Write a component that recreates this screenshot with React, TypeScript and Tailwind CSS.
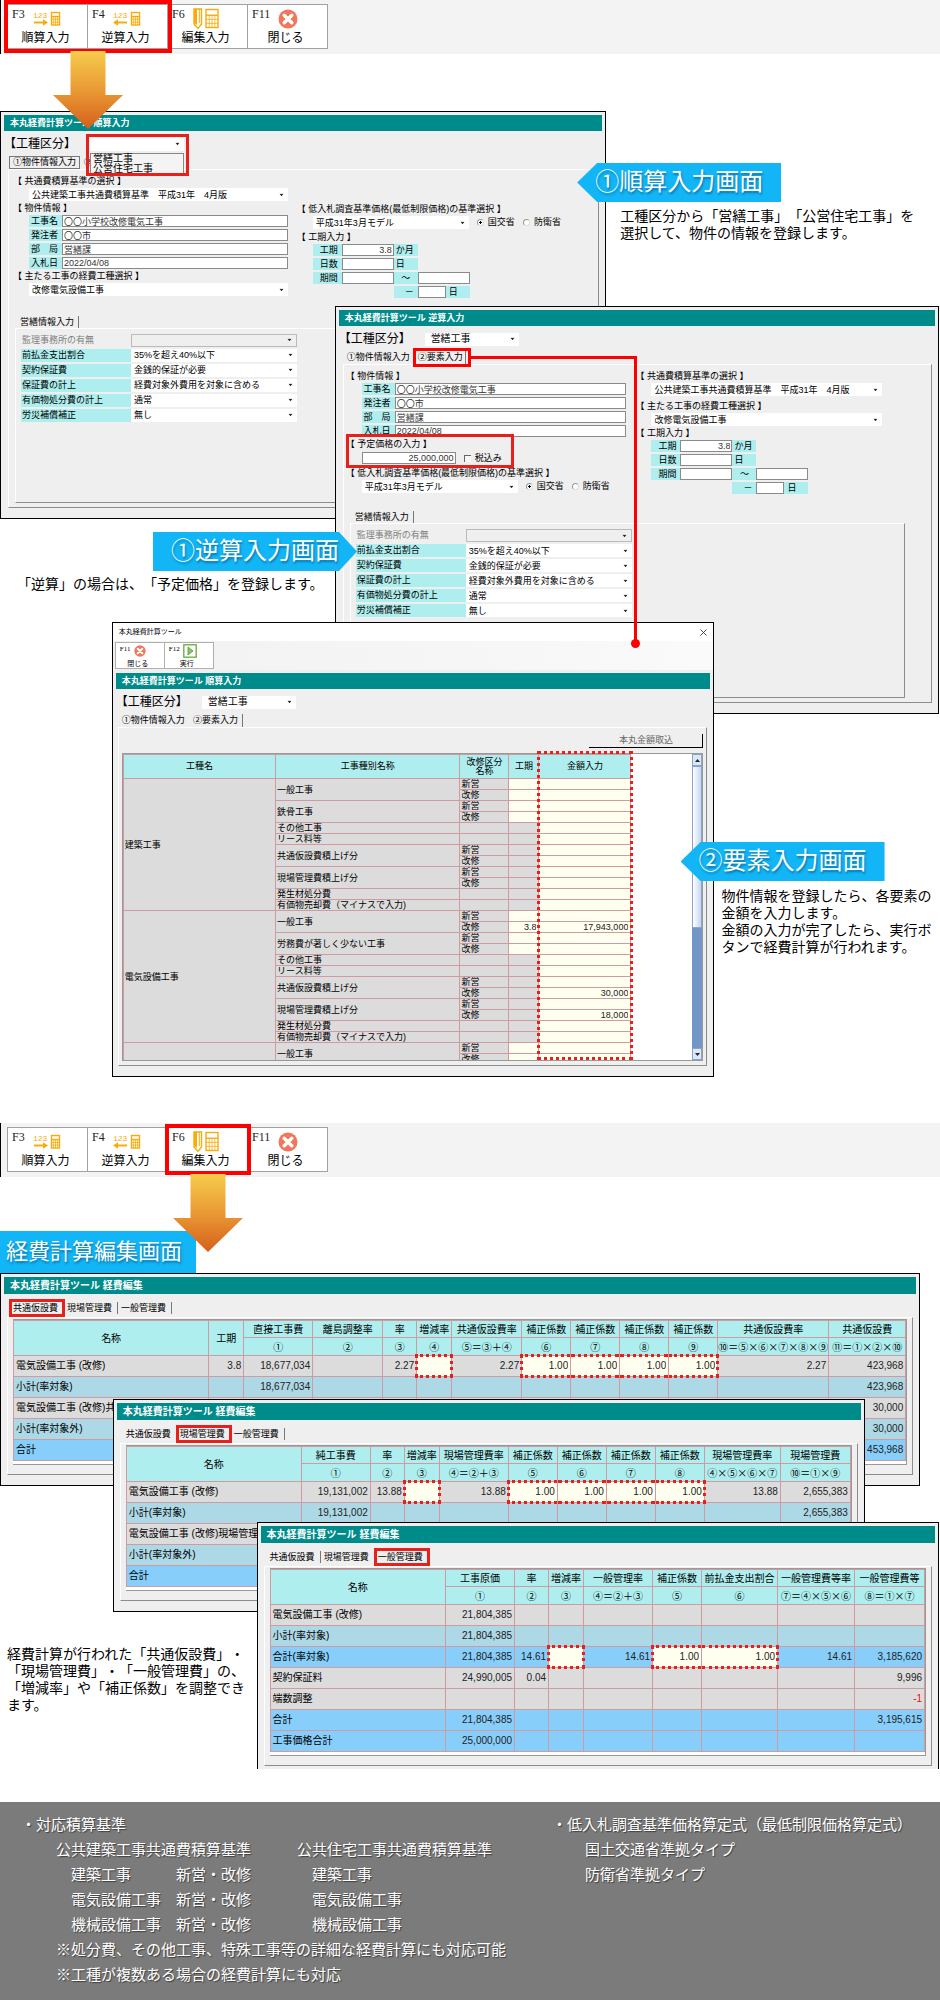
import React, { useId } from 'react';

type Tone = 'gray' | 'light' | 'sky';

interface Column {
    head: string;
    formula?: string;
    width: string;
}

interface CostRow {
    name: string;
    tone: Tone;
    cells: string[];
    edit?: number[];
}

interface WorkItem {
    label: string;
    split?: boolean;
    period?: boolean;
    values?: [string, string][];
}

const toneClass: Record<Tone, string> = {
    gray: 'bg-[#dcdcdc]',
    light: 'bg-[#add8e6]',
    sky: 'bg-[#87cefa]',
};

/* ---------- icons ---------- */

const Calculator: React.FC<{ x: number; y: number; w: number; h: number }> = ({ x, y, w, h }) => (
    <g fill="none" stroke="#f9ab0e" strokeWidth="1.4">
        <rect x={x} y={y} width={w} height={h} />
        <path d={`M${x} ${y + h * 0.32}H${x + w}`} strokeWidth="1.4" />
        <path
            d={`M${x} ${y + h * 0.55}H${x + w}M${x} ${y + h * 0.77}H${x + w}M${x + w * 0.27} ${y + h * 0.32}V${y + h}M${x + w * 0.5} ${y + h * 0.32}V${y + h}M${x + w * 0.74} ${y + h * 0.32}V${y + h}`}
            strokeWidth="0.8"
        />
    </g>
);

const CountIcon: React.FC<{ reverse?: boolean }> = ({ reverse }) => (
    <svg width="28" height="16" viewBox="0 0 28 16" aria-hidden="true">
        <text x="0" y="7" fontSize="8" fontFamily="Liberation Mono" fill="#f9ab0e">123</text>
        {reverse ? (
            <path d="M0 11.5L5 8.2V10.5H14V12.5H5V14.8Z" fill="#f9ab0e" />
        ) : (
            <path d="M15 11.5L10 8.2V10.5H1V12.5H10V14.8Z" fill="#f9ab0e" />
        )}
        <Calculator x={18.5} y={1.5} w={8} h={12.5} />
    </svg>
);

const EditIcon: React.FC = () => (
    <svg width="27" height="22" viewBox="0 0 27 22" aria-hidden="true">
        <path d="M1 1H8.5V16L5 20.5L1 16Z" fill="none" stroke="#f9ab0e" strokeWidth="1.4" />
        <path d="M1 1H4V17L1 15Z" fill="#f9ab0e" />
        <path d="M6.3 1V15" stroke="#f9ab0e" strokeWidth="1" />
        <Calculator x={13} y={1.5} w={12} h={18} />
    </svg>
);

const CloseIcon: React.FC<{ className: string }> = ({ className }) => (
    <svg className={className} viewBox="0 0 20 20" aria-hidden="true">
        <circle cx="10" cy="10" r="9.5" fill="#f0765c" />
        <path d="M6.2 6.2L13.8 13.8M13.8 6.2L6.2 13.8" stroke="#fff" strokeWidth="3.4" strokeLinecap="round" />
    </svg>
);

const RunIcon: React.FC = () => (
    <svg width="14" height="14" viewBox="0 0 14 14" aria-hidden="true">
        <rect x="0.8" y="0.8" width="12.4" height="12.4" fill="#fff" stroke="#6fb04c" strokeWidth="1.4" />
        <path d="M5 3L10 7L5 11Z" fill="#8cc46c" stroke="#4e9a34" strokeWidth="0.8" />
    </svg>
);

const DownArrow: React.FC<{ id: string }> = ({ id }) => (
    <svg className="absolute top-[47px] left-1/2 z-20 -translate-x-1/2" width="70" height="78" viewBox="0 0 70 78" aria-hidden="true">
        <defs>
            <linearGradient id={id} x1="0" y1="0" x2="0" y2="1">
                <stop offset="0" stopColor="#f7cb4b" />
                <stop offset="0.5" stopColor="#e99a35" />
                <stop offset="1" stopColor="#d55f1b" />
            </linearGradient>
        </defs>
        <path d="M17.5 0H52.5V44H70L35 78L0 44H17.5Z" fill={`url(#${id})`} />
    </svg>
);

const Caret: React.FC = () => (
    <svg className="pointer-events-none absolute top-1/2 right-1 -translate-y-1/2" width="5" height="3" viewBox="0 0 5 3" aria-hidden="true">
        <path d="M0.5 0.2H4.5L2.5 2.8Z" fill="#222" />
    </svg>
);

/* ---------- toolbar ---------- */

const ToolButton: React.FC<{ fkey: string; label: string; children: React.ReactNode }> = ({ fkey, label, children }) => (
    <button className="-ml-px flex h-[45px] w-[81px] flex-col border border-[#a0a0a0] bg-white pt-[3px]">
        <span className="flex h-[22px] items-center gap-2 pl-1">
            <span className="self-start font-['Liberation_Serif',serif] text-xs leading-[13px] text-[#222]">{fkey}</span>
            {children}
        </span>
        <span className="self-center pr-1 text-xs leading-[17px] text-black">{label}</span>
    </button>
);

const Toolbar: React.FC<{ mark: 'count' | 'edit' }> = ({ mark }) => (
    <header className="h-[54px] border-l border-black bg-[#f3f3f3] pt-1">
        <div className="flex pl-[7px]">
            <div className="relative flex">
                <ToolButton fkey="F3" label="順算入力"><CountIcon /></ToolButton>
                <ToolButton fkey="F4" label="逆算入力"><CountIcon reverse /></ToolButton>
                {mark === 'count' && (
                    <>
                        <span className="absolute -inset-1 z-10 border-4 border-[#f00]" />
                        <DownArrow id="arrow-count" />
                    </>
                )}
            </div>
            <div className="relative flex">
                <ToolButton fkey="F6" label="編集入力"><EditIcon /></ToolButton>
                {mark === 'edit' && (
                    <>
                        <span className="absolute -inset-[3px] z-10 border-4 border-[#f00]" />
                        <DownArrow id="arrow-edit" />
                    </>
                )}
            </div>
            <ToolButton fkey="F11" label="閉じる"><CloseIcon className="size-5" /></ToolButton>
        </div>
    </header>
);

/* ---------- window parts ---------- */

const Window: React.FC<{ title: string; large?: boolean; className: string; top?: React.ReactNode; children: React.ReactNode }> = ({
    title,
    large,
    className,
    top,
    children,
}) => (
    <section className={`border border-black bg-[#efefef] ${className}`}>
        {top}
        <div className="px-[3px] pt-[3px]">
            <h2 className={`bg-[#008b8b] pl-[6px] font-bold whitespace-nowrap text-white ${large ? 'text-[10px] leading-[17px]' : 'text-[9px] leading-[16px]'}`}>
                {title}
            </h2>
            {children}
        </div>
    </section>
);

const Combo: React.FC<{ id?: string; label?: string; value: string; className?: string; disabled?: boolean }> = ({
    id,
    label,
    value,
    className = '',
    disabled,
}) => (
    <span className={`relative block h-[13px] ${disabled ? 'border border-[#bbb] bg-[#efefef]' : 'bg-white'} ${className}`}>
        <select id={id} aria-label={label} disabled={disabled} className="block h-full w-full appearance-none pl-[3px] leading-[12px] text-black">
            <option>{value}</option>
        </select>
        <Caret />
    </span>
);

const HeadedCombo: React.FC<{ head: string; value: string; className: string; children?: React.ReactNode }> = ({
    head,
    value,
    className,
    children,
}) => {
    const id = useId();
    return (
        <div>
            <label htmlFor={id} className="block h-[14px] leading-[14px] whitespace-nowrap">{`【 ${head} 】`}</label>
            <div className="ml-4 flex items-center">
                <Combo id={id} value={value} className={className} />
                {children}
            </div>
        </div>
    );
};

const Heading: React.FC<{ children: string }> = ({ children }) => (
    <h3 className="h-[14px] leading-[14px] whitespace-nowrap">{`【 ${children} 】`}</h3>
);

const inputClass = 'block h-3 min-w-0 border border-[#8a8a8a] bg-white px-px leading-[10px] text-[#333]';

const projectFields = [
    ['工事名', '〇〇小学校改修電気工事'],
    ['発注者', '〇〇市'],
    ['部　局', '営繕課'],
    ['入札日', '2022/04/08'],
];

const ProjectInfo: React.FC = () => {
    const id = useId();
    return (
        <div>
            <Heading>物件情報</Heading>
            <div className="mr-[9px] ml-4 flex flex-col gap-[2px]">
                {projectFields.map(([name, value], i) => (
                    <div key={name} className="flex">
                        <label htmlFor={`${id}-${i}`} className="w-[33px] bg-[#afeeee] pr-1 text-right leading-[12px]">{name}</label>
                        <input id={`${id}-${i}`} defaultValue={value} className={`${inputClass} flex-1`} />
                    </div>
                ))}
            </div>
        </div>
    );
};

const Period: React.FC = () => {
    const id = useId();
    const cap = 'bg-[#afeeee] leading-[12px]';
    return (
        <div>
            <Heading>工期入力</Heading>
            <div className="ml-4 grid grid-cols-[29px_52px_24px_28px_24px] gap-y-[2px]">
                <label htmlFor={`${id}-m`} className={`${cap} pr-1 text-right`}>工期</label>
                <input id={`${id}-m`} defaultValue="3.8" className={`${inputClass} text-right`} />
                <span className={`${cap} pl-[2px]`}>か月</span>
                <label htmlFor={`${id}-d`} className={`${cap} col-start-1 pr-1 text-right`}>日数</label>
                <input id={`${id}-d`} className={inputClass} />
                <span className={`${cap} pl-[2px]`}>日</span>
                <label htmlFor={`${id}-s`} className={`${cap} col-start-1 pr-1 text-right`}>期間</label>
                <input id={`${id}-s`} className={inputClass} />
                <label htmlFor={`${id}-e`} className={`${cap} text-center`}>～</label>
                <input id={`${id}-e`} className={`${inputClass} col-span-2`} />
                <label htmlFor={`${id}-h`} className={`${cap} col-start-3 pr-1 text-right`}>－</label>
                <input id={`${id}-h`} className={inputClass} />
                <span className={`${cap} pl-[3px]`}>日</span>
            </div>
        </div>
    );
};

const Ministry: React.FC<{ name: string }> = ({ name }) => (
    <>
        {['国交省', '防衛省'].map((text, i) => (
            <label key={text} className="ml-2 flex items-center gap-1 whitespace-nowrap">
                <input
                    type="radio"
                    name={name}
                    defaultChecked={i === 0}
                    className="size-[7px] appearance-none rounded-full border border-[#999] border-r-[#ddd] border-b-[#ddd] bg-white checked:bg-[radial-gradient(#000_30%,#fff_40%)]"
                />
                {text}
            </label>
        ))}
    </>
);

const LowBid: React.FC<{ name: string }> = ({ name }) => (
    <HeadedCombo head="低入札調査基準価格(最低制限価格)の基準選択" value="平成31年3月モデル" className="w-[156px]">
        <Ministry name={name} />
    </HeadedCombo>
);

const repairFields = [
    ['監理事務所の有無', ''],
    ['前払金支出割合', '35%を超え40%以下'],
    ['契約保証費', '金銭的保証が必要'],
    ['保証費の計上', '経費対象外費用を対象に含める'],
    ['有価物処分費の計上', '通常'],
    ['労災補償補正', '無し'],
];

const RepairInfo: React.FC<{ className: string }> = ({ className }) => {
    const id = useId();
    return (
        <div className={className}>
            <button className="ml-[5px] block h-3 border-r border-[#777] pr-1 leading-[12px]">営繕情報入力</button>
            <div className="border border-t-white border-r-[#8c8c8c] border-b-[#8c8c8c] border-l-white pt-[5px] pb-20 pl-[5px]">
                <div className="flex flex-col gap-[2px]">
                    {repairFields.map(([name, value], i) => (
                        <div key={name} className="flex">
                            <label
                                htmlFor={`${id}-${i}`}
                                className={i === 0 ? 'w-[110px] pl-px leading-[13px] text-[#808080]' : 'w-[110px] bg-[#afeeee] pl-px leading-[13px]'}
                            >
                                {name}
                            </label>
                            <Combo id={`${id}-${i}`} value={value} disabled={i === 0} className="w-[166px]" />
                        </div>
                    ))}
                </div>
            </div>
        </div>
    );
};

const Category: React.FC<{ value: string; children?: React.ReactNode }> = ({ value, children }) => {
    const id = useId();
    return (
        <div className="mt-[5px] flex h-4 items-center">
            <label htmlFor={id} className="w-[86px] text-xs leading-4 whitespace-nowrap">【工種区分】</label>
            <div className="relative">
                <Combo id={id} value={value} className="w-[94px] pl-[3px] text-[10px]" />
                {children}
            </div>
        </div>
    );
};

const panelClass = 'border border-t-white border-r-[#8c8c8c] border-b-[#8c8c8c] border-l-white';

const StandardCombo: React.FC = () => (
    <HeadedCombo head="共通費積算基準の選択" value="公共建築工事共通費積算基準　平成31年　4月版" className="mr-[9px] flex-1" />
);

const MainWorkCombo: React.FC = () => (
    <HeadedCombo head="主たる工事の経費工種選択" value="改修電気設備工事" className="mr-[9px] flex-1" />
);

const ForwardWindow: React.FC<{ className: string }> = ({ className }) => (
    <Window title="本丸経費計算ツール 順算入力" className={`pb-[10px] text-[9px] ${className}`}>
        <Category value="">
            <ul className="absolute top-[15px] left-0 z-10 w-[94px] border border-[#888] bg-[#f4f4f4] pl-[2px] text-[10px] leading-[10px]">
                <li>営繕工事</li>
                <li>公営住宅工事</li>
            </ul>
            <span className="absolute -top-1 -left-1 z-10 h-[42px] w-[103px] border-3 border-[#e8201c]" />
        </Category>
        <div className="mt-1 ml-[5px] flex h-[13px] gap-1 leading-[11px] whitespace-nowrap">
            <button className="border border-[#777] px-[3px]">①物件情報入力</button>
            <button>②要素入力</button>
        </div>
        <div className={`mr-[3px] ml-1 pt-1 pb-1 pl-1 ${panelClass}`}>
            <div className="flex">
                <div className="w-[48.5%] shrink-0">
                    <StandardCombo />
                    <ProjectInfo />
                    <MainWorkCombo />
                </div>
                <div className="pt-7">
                    <LowBid name="ministry-forward" />
                    <Period />
                </div>
            </div>
            <RepairInfo className="mt-[18px] mr-1 ml-[2px]" />
        </div>
    </Window>
);

const ReverseWindow: React.FC<{ className: string }> = ({ className }) => (
    <Window title="本丸経費計算ツール 逆算入力" className={`pb-[10px] text-[9px] ${className}`}>
        <Category value="営繕工事" />
        <div className="mt-1 ml-2 flex h-[13px] gap-2 leading-[13px] whitespace-nowrap">
            <button>①物件情報入力</button>
            <div className="relative flex">
                <button className="border-r border-[#777] pr-[2px]">②要素入力</button>
                <span className="absolute -inset-x-[5px] -inset-y-[3px] border-3 border-[#f00]" />
                {/* line that leads to the window opened by this tab */}
                <span className="absolute top-[5px] left-[calc(100%+5px)] z-20 h-[288px] w-[166px] border-t-3 border-r-3 border-[#f00]">
                    <span className="absolute -right-[6px] -bottom-1 size-[9px] rounded-full bg-[#f00]" />
                </span>
            </div>
        </div>
        <div className={`mr-[3px] ml-1 pt-1 pb-1 pl-[2px] ${panelClass}`}>
            <div className="flex">
                <div className="w-[49.5%] shrink-0">
                    <ProjectInfo />
                    <div className="relative mb-[2px]">
                        <Heading>予定価格の入力</Heading>
                        <div className="ml-4 flex items-center gap-2 pt-px">
                            <input aria-label="予定価格" defaultValue="25,000,000" className={`${inputClass} w-[94px] text-right`} />
                            <label className="flex items-center gap-1 leading-[12px]">
                                <input type="checkbox" className="size-[7px] appearance-none border-t border-l border-[#666] bg-[#f6f6f6]" />
                                税込み
                            </label>
                        </div>
                        <span className="absolute -top-[3px] -bottom-1 left-0 w-[168px] border-3 border-[#e8201c]" />
                    </div>
                    <LowBid name="ministry-reverse" />
                </div>
                <div className="flex-1 pr-10">
                    <StandardCombo />
                    <div className="h-[3px]" />
                    <MainWorkCombo />
                    <Period />
                </div>
            </div>
            <RepairInfo className="mt-[17px] mr-[26px] ml-1" />
        </div>
    </Window>
);

/* ---------- element input window ---------- */

const commonItems = (values: [string, string][][] = []): WorkItem[] => [
    { label: 'その他工事' },
    { label: 'リース料等' },
    { label: '共通仮設費積上げ分', split: true, values: values[0] },
    { label: '現場管理費積上げ分', split: true, values: values[1] },
    { label: '発生材処分費' },
    { label: '有価物売却費（マイナスで入力)' },
];

const workGroups: { name: string; items: WorkItem[] }[] = [
    {
        name: '建築工事',
        items: [
            { label: '一般工事', split: true, period: true },
            { label: '鉄骨工事', split: true, period: true },
            ...commonItems(),
        ],
    },
    {
        name: '電気設備工事',
        items: [
            { label: '一般工事', split: true, period: true, values: [['', ''], ['3.8', '17,943,000']] },
            { label: '労務費が著しく少ない工事', split: true, period: true },
            ...commonItems([
                [['', ''], ['', '30,000']],
                [['', ''], ['', '18,000']],
            ]),
        ],
    },
    { name: '', items: [{ label: '一般工事', split: true, period: true }] },
];

const cellLine = 'border border-[#cf9ba2]';
const cellInput = 'block h-[10px] w-full bg-transparent pr-[2px] text-right leading-[10px] text-[#222]';

const WorkTable: React.FC = () => (
    <table className="w-full table-fixed border-collapse leading-[10px] whitespace-nowrap">
        <colgroup>
            <col className="w-[30%]" />
            <col />
            <col className="w-[49px]" />
            <col className="w-[30px]" />
            <col className="w-[92px]" />
        </colgroup>
        <thead>
            <tr className="h-[24px] bg-[#afeeee]">
                {['工種名', '工事種別名称', '改修区分\n名称', '工期', '金額入力'].map(head => (
                    <th key={head} className={`${cellLine} font-normal whitespace-pre leading-[9px]`}>{head}</th>
                ))}
            </tr>
        </thead>
        <tbody className="bg-[#dcdcdc]">
            {workGroups.map((group, g) => {
                const total = group.items.reduce((sum, item) => sum + (item.split ? 2 : 1), 0);
                return group.items.flatMap((item, n) =>
                    (item.split ? ['新営', '改修'] : ['']).map((kind, k) => {
                        const [period, amount] = item.values?.[k] ?? ['', ''];
                        return (
                            <tr key={`${g}-${n}-${k}`} className="h-[11px]">
                                {n === 0 && k === 0 && <td rowSpan={total} className={`${cellLine} pl-px`}>{group.name}</td>}
                                {k === 0 && <td rowSpan={item.split ? 2 : 1} className={`${cellLine} pl-px`}>{item.label}</td>}
                                <td className={`${cellLine} pl-px`}>{kind}</td>
                                <td className={`${cellLine} ${item.period ? 'bg-[#fffff0]' : ''}`}>
                                    {item.period && <input aria-label={`${item.label} ${kind} 工期`} defaultValue={period} className={cellInput} />}
                                </td>
                                <td className={`${cellLine} bg-[#fffff0]`}>
                                    <input aria-label={`${item.label} ${kind} 金額`} defaultValue={amount} className={cellInput} />
                                </td>
                            </tr>
                        );
                    })
                );
            })}
        </tbody>
    </table>
);

const SmallToolButton: React.FC<{ fkey: string; label: string; children: React.ReactNode }> = ({ fkey, label, children }) => (
    <button className="-ml-px h-[27px] w-[50px] border border-[#b0b0b0] bg-white text-[7px]">
        <span className="flex h-[15px] items-center gap-[3px] pl-1">
            <span className="self-start font-['Liberation_Serif',serif] leading-[10px]">{fkey}</span>
            {children}
        </span>
        <span className="block pr-1 leading-[9px]">{label}</span>
    </button>
);

const ElementWindow: React.FC<{ className: string }> = ({ className }) => (
    <Window
        title="本丸経費計算ツール 順算入力"
        className={`pb-[10px] text-[9px] ${className}`}
        top={
            <>
                <div className="flex h-[18px] items-center justify-between bg-white pr-[6px] pl-[6px] text-[7px]">
                    <span>本丸経費計算ツール</span>
                    <button aria-label="閉じる">
                        <svg width="7" height="7" viewBox="0 0 8 8" aria-hidden="true">
                            <path d="M0.5 0.5L7.5 7.5M7.5 0.5L0.5 7.5" stroke="#333" strokeWidth="1" />
                        </svg>
                    </button>
                </div>
                <div className="flex h-[29px] bg-gradient-to-r from-[#f1f1f1] to-[#fafafa] pt-px pl-[3px]">
                    <SmallToolButton fkey="F11" label="閉じる"><CloseIcon className="size-3" /></SmallToolButton>
                    <SmallToolButton fkey="F12" label="実行"><RunIcon /></SmallToolButton>
                </div>
            </>
        }
    >
        <Category value="営繕工事" />
        <div className="mt-1 ml-[6px] flex h-[13px] gap-2 leading-[13px] whitespace-nowrap">
            <button>①物件情報入力</button>
            <button className="border-r border-[#777] pr-1">②要素入力</button>
        </div>
        <div className={`mr-[3px] ml-[2px] px-[3px] pt-[6px] pb-1 ${panelClass}`}>
            <button className="ml-auto block h-[14px] w-[114px] border-r border-b border-black leading-[13px] text-[#666]">本丸金額取込</button>
            <div className="mt-[5px] flex border border-[#999] bg-white">
                <div className="relative min-w-0 flex-1">
                    <div className="h-[306px] overflow-hidden">
                        <WorkTable />
                    </div>
                    <span className="absolute -top-[3px] -right-[2px] bottom-0 w-[96px] border-3 border-dotted border-[#e8201c]" />
                </div>
                <div className="ml-[61px] flex w-[10px] flex-col bg-[#7296c8]">
                    <button aria-label="上へ" className="flex h-3 items-center justify-center border border-[#8aa5cc] bg-[#dce8f8]">
                        <svg width="5" height="3" viewBox="0 0 5 3" aria-hidden="true"><path d="M0 3H5L2.5 0Z" fill="#223" /></svg>
                    </button>
                    <div className="h-[162px] border border-[#8aa5cc] bg-gradient-to-r from-white to-[#c4d6f0]" />
                    <button aria-label="下へ" className="mt-auto flex h-3 items-center justify-center border border-[#8aa5cc] bg-[#dce8f8]">
                        <svg width="5" height="3" viewBox="0 0 5 3" aria-hidden="true"><path d="M0 0H5L2.5 3Z" fill="#223" /></svg>
                    </button>
                </div>
            </div>
        </div>
    </Window>
);

/* ---------- cost edit windows ---------- */

const commonColumns: Column[] = [
    { head: '名称', width: '' },
    { head: '工期', width: 'w-[35px]' },
    { head: '直接工事費', formula: '①', width: 'w-[69px]' },
    { head: '離島調整率', formula: '②', width: 'w-[70px]' },
    { head: '率', formula: '③', width: 'w-[34px]' },
    { head: '増減率', formula: '④', width: 'w-[35px]' },
    { head: '共通仮設費率', formula: '⑤＝③＋④', width: 'w-[70px]' },
    { head: '補正係数', formula: '⑥', width: 'w-[49px]' },
    { head: '補正係数', formula: '⑦', width: 'w-[49px]' },
    { head: '補正係数', formula: '⑧', width: 'w-[49px]' },
    { head: '補正係数', formula: '⑨', width: 'w-[49px]' },
    { head: '共通仮設費率', formula: '⑩＝⑤×⑥×⑦×⑧×⑨', width: 'w-[111px]' },
    { head: '共通仮設費', formula: '⑪＝①×②×⑩', width: 'w-[77px]' },
];

const commonRows: CostRow[] = [
    {
        name: '電気設備工事 (改修)',
        tone: 'gray',
        cells: ['3.8', '18,677,034', '', '2.27', '', '2.27', '1.00', '1.00', '1.00', '1.00', '2.27', '423,968'],
        edit: [4, 6, 7, 8, 9],
    },
    { name: '小計(率対象)', tone: 'light', cells: ['', '18,677,034', '', '', '', '', '', '', '', '', '', '423,968'] },
    { name: '電気設備工事 (改修)共通仮設費積上げ分', tone: 'gray', cells: ['', '', '', '', '', '', '', '', '', '', '', '30,000'] },
    { name: '小計(率対象外)', tone: 'light', cells: ['', '', '', '', '', '', '', '', '', '', '', '30,000'] },
    { name: '合計', tone: 'sky', cells: ['', '', '', '', '', '', '', '', '', '', '', '453,968'] },
];

const siteColumns: Column[] = [
    { head: '名称', width: '' },
    { head: '純工事費', formula: '①', width: 'w-[69px]' },
    { head: '率', formula: '②', width: 'w-[34px]' },
    { head: '増減率', formula: '③', width: 'w-[35px]' },
    { head: '現場管理費率', formula: '④＝②＋③', width: 'w-[69px]' },
    { head: '補正係数', formula: '⑤', width: 'w-[49px]' },
    { head: '補正係数', formula: '⑥', width: 'w-[49px]' },
    { head: '補正係数', formula: '⑦', width: 'w-[49px]' },
    { head: '補正係数', formula: '⑧', width: 'w-[49px]' },
    { head: '現場管理費率', formula: '④×⑤×⑥×⑦', width: 'w-[76px]' },
    { head: '現場管理費', formula: '⑩＝①×⑨', width: 'w-[70px]' },
];

const siteRows: CostRow[] = [
    {
        name: '電気設備工事 (改修)',
        tone: 'gray',
        cells: ['19,131,002', '13.88', '', '13.88', '1.00', '1.00', '1.00', '1.00', '13.88', '2,655,383'],
        edit: [2, 4, 5, 6, 7],
    },
    { name: '小計(率対象)', tone: 'light', cells: ['19,131,002', '', '', '', '', '', '', '', '', '2,655,383'] },
    { name: '電気設備工事 (改修)現場管理費積上げ分', tone: 'gray', cells: ['', '', '', '', '', '', '', '', '', ''] },
    { name: '小計(率対象外)', tone: 'light', cells: ['', '', '', '', '', '', '', '', '', ''] },
    { name: '合計', tone: 'sky', cells: ['', '', '', '', '', '', '', '', '', ''] },
];

const generalColumns: Column[] = [
    { head: '名称', width: '' },
    { head: '工事原価', formula: '①', width: 'w-[69px]' },
    { head: '率', formula: '②', width: 'w-[34px]' },
    { head: '増減率', formula: '③', width: 'w-[35px]' },
    { head: '一般管理率', formula: '④＝②＋③', width: 'w-[69px]' },
    { head: '補正係数', formula: '⑤', width: 'w-[49px]' },
    { head: '前払金支出割合', formula: '⑥', width: 'w-[76px]' },
    { head: '一般管理費等率', formula: '⑦＝④×⑤×⑥', width: 'w-[77px]' },
    { head: '一般管理費等', formula: '⑧＝①×⑦', width: 'w-[70px]' },
];

const generalRows: CostRow[] = [
    { name: '電気設備工事 (改修)', tone: 'gray', cells: ['21,804,385', '', '', '', '', '', '', ''] },
    { name: '小計(率対象)', tone: 'light', cells: ['21,804,385', '', '', '', '', '', '', ''] },
    {
        name: '合計(率対象)',
        tone: 'sky',
        cells: ['21,804,385', '14.61', '', '14.61', '1.00', '1.00', '14.61', '3,185,620'],
        edit: [2, 4, 5],
    },
    { name: '契約保証料', tone: 'gray', cells: ['24,990,005', '0.04', '', '', '', '', '', '9,996'] },
    { name: '端数調整', tone: 'gray', cells: ['', '', '', '', '', '', '', '-1'] },
    { name: '合計', tone: 'sky', cells: ['21,804,385', '', '', '', '', '', '', '3,195,615'] },
    { name: '工事価格合計', tone: 'sky', cells: ['25,000,000', '', '', '', '', '', '', ''] },
];

const CostTable: React.FC<{ columns: Column[]; rows: CostRow[] }> = ({ columns, rows }) => (
    <table className="w-full table-fixed border-collapse text-[10px] leading-[14px] whitespace-nowrap">
        <colgroup>
            {columns.map((col, i) => <col key={i} className={col.width} />)}
        </colgroup>
        <thead className="bg-[#afeeee] font-['Noto_Sans_CJK_JP',sans-serif]">
            <tr className="h-[17px]">
                {columns.map((col, i) => (
                    <th key={i} rowSpan={col.formula ? 1 : 2} className={`${cellLine} font-normal`}>{col.head}</th>
                ))}
            </tr>
            <tr className="h-[18px]">
                {columns.filter(col => col.formula).map((col, i) => (
                    <th key={i} className={`${cellLine} overflow-hidden font-normal`}>{col.formula}</th>
                ))}
            </tr>
        </thead>
        <tbody>
            {rows.map(row => (
                <tr key={row.name} className={`h-[21px] ${toneClass[row.tone]}`}>
                    <td className={`${cellLine} overflow-hidden pl-[2px]`}>{row.name}</td>
                    {row.cells.map((cell, i) => {
                        if (!row.edit?.includes(i)) {
                            return (
                                <td key={i} className={`${cellLine} pr-[2px] text-right ${cell.startsWith('-') ? 'text-[#f00]' : 'text-[#222]'}`}>{cell}</td>
                            );
                        }
                        const first = !row.edit.includes(i - 1);
                        const last = !row.edit.includes(i + 1);
                        return (
                            <td key={i} className={`${cellLine} relative bg-[#fffff0]`}>
                                <input
                                    aria-label={`${row.name} ${columns[i + 1].head}`}
                                    defaultValue={cell}
                                    className="block w-full bg-transparent pr-[2px] text-right leading-[14px] text-[#222]"
                                />
                                <span
                                    className={`pointer-events-none absolute -inset-y-[2px] border-y-3 border-dotted border-[#e8201c] ${first ? '-left-[2px] border-l-3' : 'left-0'} ${last ? '-right-[2px] border-r-3' : 'right-0'}`}
                                />
                            </td>
                        );
                    })}
                </tr>
            ))}
        </tbody>
    </table>
);

const costTabs = ['共通仮設費', '現場管理費', '一般管理費'];

const CostWindow: React.FC<{ active: number; columns: Column[]; rows: CostRow[]; className: string }> = ({ active, columns, rows, className }) => (
    <Window large title="本丸経費計算ツール 経費編集" className={className}>
        <div className="mt-[5px] ml-[6px] flex h-[18px] items-center text-[9px] leading-[12px] whitespace-nowrap">
            {costTabs.map((tab, i) => (
                <div key={tab} className="relative">
                    <button className={`border-r pr-[5px] pl-[3px] ${i + 1 === active ? 'border-transparent' : 'border-[#777]'}`}>{tab}</button>
                    {i === active && <span className="absolute -inset-x-px -inset-y-[3px] border-3 border-[#e8201c]" />}
                </div>
            ))}
        </div>
        <div className={`mr-[3px] ml-[3px] pt-px pr-[5px] pb-[9px] pl-[5px] ${panelClass}`}>
            <div className="border-t border-r border-b border-[#999] bg-white pb-[3px]">
                <CostTable columns={columns} rows={rows} />
            </div>
        </div>
    </Window>
);

/* ---------- captions ---------- */

const Badge: React.FC<{ point: 'left' | 'right'; children: string }> = ({ point, children }) => (
    <h2
        className={`h-[39px] w-fit bg-[#12b5f5] px-[18px] text-2xl leading-[37px] whitespace-nowrap text-white [text-shadow:1px_2px_2px_rgba(0,60,110,0.5)] ${
            point === 'left'
                ? '[clip-path:polygon(20px_0,100%_0,100%_100%,20px_100%,0_50%)]'
                : '[clip-path:polygon(0_0,calc(100%_-_18px)_0,100%_50%,calc(100%_-_18px)_100%,0_100%)]'
        }`}
    >
        {children}
    </h2>
);

const stageClass = 'grid items-start *:col-start-1 *:row-start-1';

const App: React.FC = () => (
    <div className="bg-white font-['Liberation_Sans','Noto_Sans_CJK_JP',sans-serif] text-black [text-spacing-trim:space-all]">
        <Toolbar mark="count" />
        <main className={stageClass}>
            <ForwardWindow className="mt-[57px] w-[64.5%]" />
            <ReverseWindow className="mt-[252px] ml-[35.6%] w-[64.3%]" />
            <ElementWindow className="mt-[568px] ml-[11.9%] w-[64.1%]" />
            <div className="z-10 mt-[109px] ml-[61.4%] justify-self-start">
                <Badge point="left">①順算入力画面</Badge>
                <p className="mt-[6px] pl-[43px] text-sm leading-[17px] whitespace-nowrap">
                    工種区分から「営繕工事」「公営住宅工事」を<br />
                    選択して、物件の情報を登録します。
                </p>
            </div>
            <div className="z-10 mt-[478px] justify-self-start">
                <div className="pl-[153px]">
                    <Badge point="right">①逆算入力画面</Badge>
                </div>
                <p className="mt-[5px] pl-[17px] text-sm leading-[17px] whitespace-nowrap">「逆算」の場合は、「予定価格」を登録します。</p>
            </div>
            <div className="z-10 mt-[788px] ml-[72.4%] justify-self-start">
                <Badge point="left">②要素入力画面</Badge>
                <p className="mt-[7px] pl-[41px] text-sm leading-[17px] whitespace-nowrap">
                    物件情報を登録したら、各要素の<br />
                    金額を入力します。<br />
                    金額の入力が完了したら、実行ボ<br />
                    タンで経費計算が行われます。
                </p>
            </div>
        </main>

        <div className="mt-[46px]">
            <Toolbar mark="edit" />
            <div className={stageClass}>
                <h2 className="mt-[54px] h-[42px] w-fit bg-[#12b5f5] pr-[14px] pl-[6px] text-[22px] leading-[42px] whitespace-nowrap text-white [text-shadow:1px_2px_2px_rgba(0,60,110,0.5)]">
                    経費計算編集画面
                </h2>
                <CostWindow active={0} columns={commonColumns} rows={commonRows} className="mt-[96px] w-[97.9%] pb-[10px]" />
                <CostWindow active={1} columns={siteColumns} rows={siteRows} className="mt-[222px] ml-[12%] w-[80%] pb-[10px]" />
                <CostWindow active={2} columns={generalColumns} rows={generalRows} className="mt-[345px] ml-[27.3%] w-[72.6%] border-b-0 pb-[3px]" />
                <p className="mt-[469px] ml-[7px] justify-self-start text-sm leading-[17px] whitespace-nowrap">
                    経費計算が行われた「共通仮設費」・<br />
                    「現場管理費」・「一般管理費」の、<br />
                    「増減率」や「補正係数」を調整でき<br />
                    ます。
                </p>
            </div>
        </div>

        <footer className="mt-[33px] flex bg-[#7b7b7b] pt-[10px] pb-[14px] pl-[21px] text-[15px] leading-[25px] whitespace-nowrap text-white [text-shadow:1px_1px_1px_rgba(0,0,0,0.5)]">
            <div className="w-[531px]">
                <h3>・対応積算基準</h3>
                <div className="pl-[35px]">
                    <div className="flex">
                        <div className="w-[241px]">
                            <p>公共建築工事共通費積算基準</p>
                            <ul className="pl-[15px]">
                                {['建築工事', '電気設備工事', '機械設備工事'].map(work => (
                                    <li key={work} className="flex">
                                        <span className="w-[105px]">{work}</span>
                                        <span>新営・改修</span>
                                    </li>
                                ))}
                            </ul>
                        </div>
                        <div>
                            <p>公共住宅工事共通費積算基準</p>
                            <ul className="pl-[15px]">
                                <li>建築工事</li>
                                <li>電気設備工事</li>
                                <li>機械設備工事</li>
                            </ul>
                        </div>
                    </div>
                    <p>※処分費、その他工事、特殊工事等の詳細な経費計算にも対応可能</p>
                    <p>※工種が複数ある場合の経費計算にも対応</p>
                </div>
            </div>
            <div>
                <h3>・低入札調査基準価格算定式（最低制限価格算定式）</h3>
                <ul className="pl-[33px]">
                    <li>国土交通省準拠タイプ</li>
                    <li>防衛省準拠タイプ</li>
                </ul>
            </div>
        </footer>
    </div>
);

export default App;
